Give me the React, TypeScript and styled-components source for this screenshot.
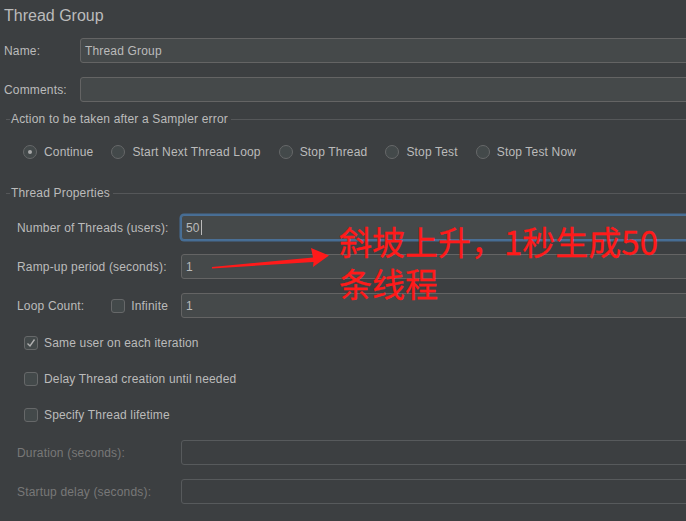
import React from "react";
import styled, { createGlobalStyle } from "styled-components";

const Global = createGlobalStyle`
  html, body {
    margin: 0;
    padding: 0;
    background: #3c3f41;
    overflow: hidden;
  }
  body {
    font-family: "Liberation Sans", Arial, sans-serif;
    font-size: 12px;
    letter-spacing: 0.17px;
    color: #bbbbbb;
  }
`;

const Page = styled.div`
  position: relative;
  width: 686px;
  height: 521px;
  background: #3c3f41;
  display: flex;
  flex-direction: column;
  overflow: hidden;
`;

const Title = styled.div`
  height: 30px;
  line-height: 31px;
  padding-left: 4px;
  font-size: 16px;
  letter-spacing: 0;
  color: #bbbbbb;
`;

const Row = styled.div<{ $top: number; $indent?: number }>`
  display: flex;
  align-items: center;
  height: 25px;
  margin-top: ${(p) => p.$top}px;
  padding-left: ${(p) => p.$indent ?? 0}px;
`;

const Label = styled.div<{ $width: number; $dim?: boolean }>`
  width: ${(p) => p.$width}px;
  flex: none;
  display: flex;
  align-items: center;
  color: ${(p) => (p.$dim ? "#787878" : "#bbbbbb")};
  white-space: nowrap;
`;

const Field = styled.div<{ $focus?: boolean; $disabled?: boolean }>`
  flex: 1;
  height: 25px;
  box-sizing: border-box;
  margin-right: -12px;
  border: 1px solid ${(p) => (p.$focus ? "#4a6f95" : p.$disabled ? "#575a5c" : "#646464")};
  border-radius: 3px;
  background: ${(p) => (p.$disabled ? "#3c3f41" : "#45494a")};
  box-shadow: ${(p) => (p.$focus ? "0 0 0 1.5px #466d94" : "none")};
  padding-left: 4px;
  display: flex;
  align-items: center;
  color: #bbbbbb;
  font-size: 12px;
`;

const Caret = styled.span`
  display: inline-block;
  width: 1px;
  height: 15px;
  background: #bbbbbb;
  margin-left: 1px;
`;

const Legend = styled.div<{ $top: number }>`
  display: flex;
  align-items: center;
  height: 14px;
  margin-top: ${(p) => p.$top}px;
  padding-left: 6px;
  color: #bbbbbb;
  &::before {
    content: "";
    width: 4px;
    height: 1px;
    background: #555759;
    margin-right: 1px;
  }
  &::after {
    content: "";
    flex: 1;
    height: 1px;
    background: #555759;
    margin-left: 3px;
  }
`;

const RadioRow = styled.div`
  display: flex;
  align-items: center;
  gap: 18px;
  height: 20px;
  margin-top: 16px;
  padding-left: 23px;
`;

const Option = styled.div`
  display: flex;
  align-items: center;
  gap: 7px;
  white-space: nowrap;
`;

const RadioCircle = styled.span<{ $on?: boolean }>`
  width: 14px;
  height: 14px;
  box-sizing: border-box;
  border-radius: 50%;
  border: 1px solid #666869;
  background: #43494a;
  display: flex;
  align-items: center;
  justify-content: center;
  &::after {
    content: "";
    width: 4px;
    height: 4px;
    border-radius: 50%;
    background: ${(p) => (p.$on ? "#a9a9a9" : "transparent")};
  }
`;

const Box = styled.span`
  width: 14px;
  height: 14px;
  box-sizing: border-box;
  border-radius: 3px;
  border: 1px solid #666869;
  background: #43494a;
  display: flex;
  align-items: center;
  justify-content: center;
  flex: none;
`;

const CheckRow = styled.div<{ $top: number }>`
  display: flex;
  align-items: center;
  gap: 6px;
  height: 20px;
  margin-top: ${(p) => p.$top}px;
  padding-left: 24px;
`;

const Inline = styled.div`
  display: flex;
  align-items: center;
  gap: 6px;
  margin-left: 27px;
`;

const Note = styled.div`
  position: absolute;
  left: 339px;
  top: 220px;
  font-family: "Noto Sans CJK SC", "Microsoft YaHei", sans-serif;
  font-size: 33px;
  line-height: 42px;
  color: #ff1a1a;
  white-space: nowrap;
  letter-spacing: 0;
  -webkit-text-stroke: 0.3px #ff1a1a;
`;

const Arrow = styled.svg`
  position: absolute;
  left: 0;
  top: 0;
  pointer-events: none;
`;

function Check() {
  return (
    <svg width="10" height="10" viewBox="0 0 10 10">
      <path d="M1.5 5.5 L4 8 L8.5 1.5" fill="none" stroke="#b0b0b0" strokeWidth="1.4" />
    </svg>
  );
}

export default function App() {
  const radios = ["Continue", "Start Next Thread Loop", "Stop Thread", "Stop Test", "Stop Test Now"];
  return (
    <Page>
      <Global />
      <Title>Thread Group</Title>
      <Row $top={8} $indent={4}>
        <Label $width={76}>Name:</Label>
        <Field>Thread Group</Field>
      </Row>
      <Row $top={14} $indent={4}>
        <Label $width={76}>Comments:</Label>
        <Field />
      </Row>

      <Legend $top={10}>Action to be taken after a Sampler error</Legend>
      <RadioRow>
        {radios.map((r, i) => (
          <Option key={r}>
            <RadioCircle $on={i === 0} />
            {r}
          </Option>
        ))}
      </RadioRow>

      <Legend $top={24}>Thread Properties</Legend>
      <Row $top={15} $indent={17}>
        <Label $width={164}>Number of Threads (users):</Label>
        <Field $focus>
          50
          <Caret />
        </Field>
      </Row>
      <Row $top={14} $indent={17}>
        <Label $width={164}>Ramp-up period (seconds):</Label>
        <Field>1</Field>
      </Row>
      <Row $top={14} $indent={17}>
        <Label $width={164}>
          Loop Count:
          <Inline>
            <Box />
            Infinite
          </Inline>
        </Label>
        <Field>1</Field>
      </Row>

      <CheckRow $top={15}>
        <Box>
          <Check />
        </Box>
        Same user on each iteration
      </CheckRow>
      <CheckRow $top={16}>
        <Box />
        Delay Thread creation until needed
      </CheckRow>
      <CheckRow $top={16}>
        <Box />
        Specify Thread lifetime
      </CheckRow>

      <Row $top={15} $indent={17}>
        <Label $width={164} $dim>
          Duration (seconds):
        </Label>
        <Field $disabled />
      </Row>
      <Row $top={14} $indent={17}>
        <Label $width={164} $dim>
          Startup delay (seconds):
        </Label>
        <Field $disabled />
      </Row>

      <Arrow width="686" height="521" viewBox="0 0 686 521">
        <polygon points="212,267 313,257.5 311,248 329,255.5 313,267 313.5,262 212,268.5" fill="#ff1a1a" />
      </Arrow>
      <Note>
        斜坡上升，1秒生成50
        <br />
        条线程
      </Note>
    </Page>
  );
}
